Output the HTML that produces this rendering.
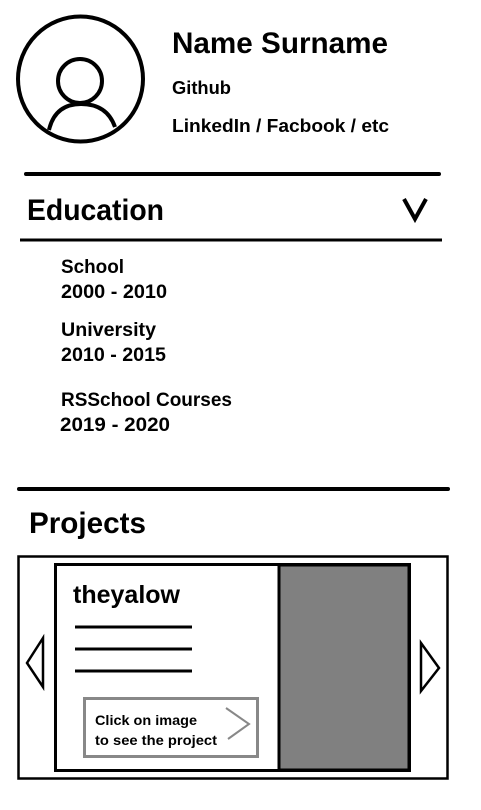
<!DOCTYPE html>
<html><head><meta charset="utf-8"><style>
html,body{margin:0;padding:0;background:#fff;}
svg{display:block;}
text{font-family:"Liberation Sans",sans-serif;font-weight:bold;fill:#000;}
</style></head><body>
<svg width="481" height="810" viewBox="0 0 481 810" xmlns="http://www.w3.org/2000/svg">
<rect width="481" height="810" fill="#fff"/>
<circle cx="80.5" cy="79" r="62.5" fill="none" stroke="#000" stroke-width="4"/>
<circle cx="80" cy="81" r="22" fill="none" stroke="#000" stroke-width="4"/>
<path d="M49 130 Q55 104 81 104 Q107 104 115 127" fill="none" stroke="#000" stroke-width="4"/>
<text x="172" y="53" font-size="30" textLength="216" lengthAdjust="spacingAndGlyphs">Name Surname</text>
<text x="172" y="94" font-size="18" textLength="59" lengthAdjust="spacingAndGlyphs">Github</text>
<text x="172" y="132" font-size="18" textLength="217" lengthAdjust="spacingAndGlyphs">LinkedIn / Facbook / etc</text>
<line x1="26" y1="174" x2="439" y2="174" stroke="#000" stroke-width="4" stroke-linecap="round"/>
<text x="27" y="220" font-size="30" textLength="137" lengthAdjust="spacingAndGlyphs">Education</text>
<path d="M404 199 L415 219 L426 199" fill="none" stroke="#000" stroke-width="4"/>
<line x1="20" y1="240" x2="442" y2="240" stroke="#000" stroke-width="3"/>
<text x="61" y="273" font-size="19" textLength="63" lengthAdjust="spacingAndGlyphs">School</text>
<text x="61" y="298" font-size="19" textLength="106" lengthAdjust="spacingAndGlyphs">2000 - 2010</text>
<text x="61" y="336" font-size="19" textLength="95" lengthAdjust="spacingAndGlyphs">University</text>
<text x="61" y="361" font-size="19" textLength="105" lengthAdjust="spacingAndGlyphs">2010  - 2015</text>
<text x="61" y="406" font-size="19" textLength="171" lengthAdjust="spacingAndGlyphs">RSSchool Courses</text>
<text x="60" y="431" font-size="19" textLength="110" lengthAdjust="spacingAndGlyphs">2019  - 2020</text>
<line x1="19" y1="489" x2="448" y2="489" stroke="#000" stroke-width="4" stroke-linecap="round"/>
<text x="29" y="533" font-size="30" textLength="117" lengthAdjust="spacingAndGlyphs">Projects</text>
<rect x="18.5" y="556.5" width="429" height="222" fill="none" stroke="#000" stroke-width="2.5"/>
<rect x="55.5" y="564.5" width="354" height="206" fill="none" stroke="#000" stroke-width="3"/>
<rect x="279" y="565" width="130" height="205" fill="#808080" stroke="#000" stroke-width="3"/>
<text x="73" y="603" font-size="25" textLength="107" lengthAdjust="spacingAndGlyphs">theyalow</text>
<line x1="75" y1="627" x2="192" y2="627" stroke="#000" stroke-width="3"/>
<line x1="75" y1="649" x2="192" y2="649" stroke="#000" stroke-width="3"/>
<line x1="75" y1="671" x2="192" y2="671" stroke="#000" stroke-width="3"/>
<rect x="84.5" y="698.5" width="173" height="58" fill="none" stroke="#888" stroke-width="3"/>
<text x="95" y="725" font-size="14" textLength="102" lengthAdjust="spacingAndGlyphs">Click on image</text>
<text x="95" y="745" font-size="14" textLength="122" lengthAdjust="spacingAndGlyphs">to see the project</text>
<path d="M226 708 L249 724 L228 739" fill="none" stroke="#888" stroke-width="2"/>
<path d="M43 638 L27 663 L43 687 Z" fill="none" stroke="#000" stroke-width="2.5"/>
<path d="M421 643 L439 668 L421 691 Z" fill="none" stroke="#000" stroke-width="2.5"/>
</svg>
</body></html>
